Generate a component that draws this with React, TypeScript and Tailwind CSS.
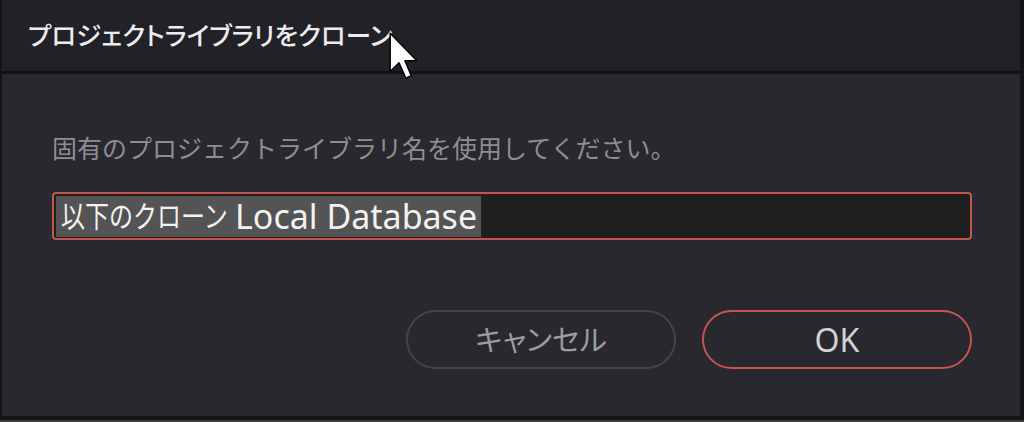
export default function App() {
  const font = { fontFamily: '"Noto Sans", "Noto Sans CJK JP", sans-serif' };
  const palt = { fontFeatureSettings: '"palt"' };
  return (
    <div className="w-[1024px] h-[422px] flex flex-col bg-[#3b3b3d] overflow-hidden" style={font}>
      <div className="h-[420px] bg-[#141417] pl-[2px] pr-[4px] pb-[4px] relative">
        <div className="h-full flex flex-col">
          <div className="h-[74px] bg-[#222128] border-b-[3px] border-[#121215] flex items-center pl-[26px]">
            <span className="text-[25.5px] text-[#ececec] font-medium leading-none" style={palt}>
              プロジェクトライブラリをクローン
            </span>
          </div>
          <div className="flex-1 bg-[#29282f] flex flex-col pl-[50px] pr-[48px] pt-[57px]">
            <div className="text-[25px] leading-[34px] text-[#8e8e92] whitespace-nowrap">
              固有のプロジェクトライブラリ名を使用してください。
            </div>
            <div className="mt-[27px] h-[48px] border-2 border-[#c4554e] rounded-[4px] bg-[#1f1f20] flex items-center px-[2px]">
              <span className="h-[41px] flex items-center bg-[#545454] pl-[5px] pr-[4px] text-[#f2f2f2] whitespace-nowrap">
                <span className="w-[168px] inline-block">
                  <span className="inline-block origin-left scale-x-[0.8] text-[30px] leading-[36px]">以下のクローン</span>
                </span>
                <span className="text-[34px] leading-[40px] ml-[6px]">Local Database</span>
              </span>
            </div>
            <div className="mt-[70px] flex justify-end gap-[26px]">
              <div className="w-[270px] h-[59px] rounded-full border-2 border-[#42464b] flex items-center justify-center text-[29px] text-[#9c9ca0]" style={palt}>
                キャンセル
              </div>
              <div className="w-[270px] h-[59px] rounded-full border-2 border-[#c4554e] flex items-center justify-center text-[32px] text-[#d2d2d4]">
                OK
              </div>
            </div>
          </div>
        </div>
        <svg className="absolute left-[389px] top-[32px]" width="30" height="48" viewBox="0 0 12.5 20">
          <path d="M0.5 0.5 L0.5 16.5 L4.2 12.8 L7 19.2 L9.3 18.2 L6.6 12 L11.6 12 Z" fill="#ffffff" stroke="#000000" strokeWidth="0.6" strokeLinejoin="round" />
        </svg>
      </div>
    </div>
  );
}
